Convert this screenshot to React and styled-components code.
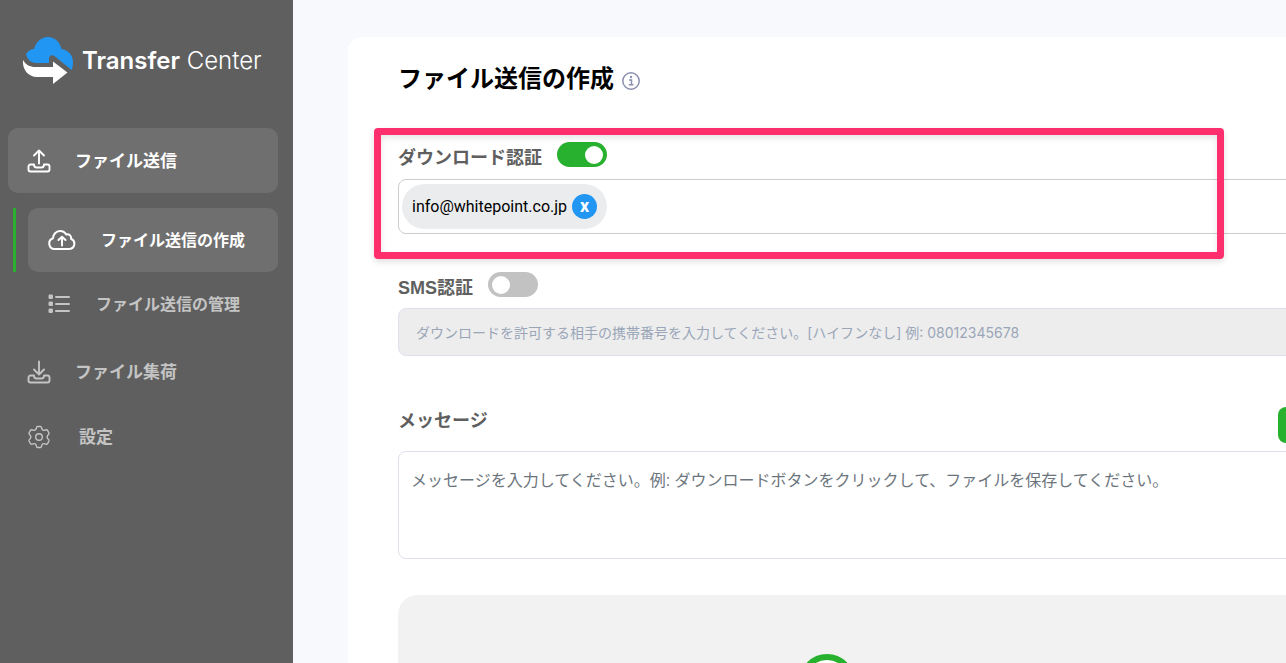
import React from 'react'
import styled, { createGlobalStyle } from 'styled-components'

const green = '#28b12f'
const blue = '#2196f3'
const grey = '#5f5f5f'
const muted = '#c4c4c4'
const fonts = `'Liberation Sans', 'Noto Sans CJK JP', sans-serif`

const GlobalStyle = createGlobalStyle`
    *{
        box-sizing: border-box;
    }
    body{
        margin: 0;
        background: #f8f9fd;
        font-family: ${fonts};
    }
    button, input, textarea{
        font-family: inherit;
    }
`;

const Layout = styled.div`
    display: flex;
    height: 100vh;
    overflow: hidden;
`;

const Sidebar = styled.aside`
    flex: 0 0 293px;
    background: ${grey};
    padding: 36px 15px 0 8px;
`;

const Brand = styled.a`
    display: flex;
    align-items: center;
    gap: 8px;
    height: 48px;
    margin: 0 0 44px 14px;
    color: white;
    font-family: Inter, sans-serif;
    font-size: 24px;
    font-weight: 300;
    text-decoration: none;
    white-space: nowrap;
    b{
        font-weight: 600;
    }
`;

const NavList = styled.ul`
    list-style: none;
    margin: 0;
    padding: 0;
`;

const NavItem = styled.li`
    min-height: 65px;
`;

const NavLink = styled.a`
    display: flex;
    align-items: center;
    gap: ${props => props.$wide ? '28px' : '24px'};
    height: 65px;
    padding-left: 19px;
    border-radius: 10px;
    background: ${props => props.$active ? '#6f6f6f' : 'transparent'};
    color: ${props => props.$active ? 'white' : muted};
    font-size: 17px;
    font-weight: 700;
    text-decoration: none;
    svg{
        flex: none;
    }
    span{
        padding-bottom: 2px;
    }
`;

const SubList = styled(NavList)`
    margin: 15px 0 3px 5px;
`;

const SubItem = styled.li`
    height: 64px;
    padding-left: 12px;
    border-left: 3px solid ${props => props.$active ? green : 'transparent'};
`;

const SubLink = styled(NavLink)`
    gap: 25px;
    height: 64px;
    padding-left: 20px;
    font-size: 16px;
`;

const Main = styled.main`
    flex: 1;
    min-width: 0;
    overflow: hidden;
    padding: 37px 0 0 55px;
`;

const Card = styled.form`
    width: calc(100% + 92px);
    min-height: 100%;
    padding: 24px 0 0 50px;
    border-radius: 14px;
    background: white;
`;

const TitleRow = styled.div`
    display: flex;
    align-items: center;
    gap: 7px;
    height: 36px;
    h1{
        margin: 0;
        color: black;
        font-size: 24px;
        line-height: 36px;
        font-weight: 700;
    }
    svg{
        margin-top: 3px;
    }
`;

const Section = styled.section`
    position: relative;
    margin-top: ${props => props.$gap};
`;

const Highlight = styled.div`
    position: absolute;
    top: -14px;
    left: -24px;
    width: 850px;
    height: 131px;
    border: 7px solid #ff2e6c;
    border-radius: 4px;
    box-shadow: 0 3px 6px rgba(0, 0, 0, 0.12), inset 0 3px 6px rgba(0, 0, 0, 0.1);
    pointer-events: none;
`;

const LabelRow = styled.div`
    display: flex;
    align-items: center;
    gap: 15px;
`;

const MessageRow = styled(LabelRow)`
    align-items: flex-start;
    justify-content: space-between;
`;

const Label = styled.label`
    padding-top: 4px;
    color: ${grey};
    font-size: 18px;
    line-height: 24px;
    font-weight: 700;
`;

const MessageLabel = styled(Label)`
    padding-top: 2px;
`;

const Toggle = styled.input`
    appearance: none;
    display: flex;
    align-items: center;
    width: 50px;
    height: 25px;
    margin: 0 0 3px;
    padding: 0 4px;
    border-radius: 13px;
    background: #c2c2c2;
    cursor: pointer;
    &::before{
        content: '';
        width: 18px;
        height: 18px;
        border-radius: 50%;
        background: white;
    }
    &:checked{
        justify-content: flex-end;
        background: ${green};
    }
`;

const TagField = styled.div`
    display: flex;
    align-items: center;
    height: 55px;
    margin-top: 9px;
    padding: 0 3px;
    border: 1px solid #ccc;
    border-radius: 8px;
    input{
        flex: 1;
        height: 40px;
        border: 0;
        outline: 0;
        background: transparent;
        font-size: 16px;
    }
`;

const Tag = styled.span`
    display: flex;
    align-items: center;
    gap: 5px;
    height: 45px;
    padding: 0 10px;
    border-radius: 23px;
    background: #ebecee;
    color: black;
    font-family: Roboto, sans-serif;
    font-size: 16px;
`;

const RemoveButton = styled.button`
    width: 25px;
    height: 25px;
    padding: 0 0 2px;
    border: 0;
    border-radius: 50%;
    background: ${blue};
    color: white;
    font-size: 18px;
    line-height: 20px;
    font-weight: 700;
`;

const PhoneInput = styled.input`
    display: block;
    width: 100%;
    height: 48px;
    margin-top: 8px;
    padding: 0 17px;
    border: 1px solid #dfdfee;
    border-radius: 8px;
    background: #ededed;
    && {
        font-family: Inter, 'Noto Sans CJK JP', sans-serif;
    }
    font-size: 14px;
    &::placeholder{
        color: #9aa6b8;
        opacity: 1;
    }
`;

const TemplateButton = styled.button`
    width: 100px;
    height: 36px;
    border: 0;
    border-radius: 8px;
    background: ${green};
`;

const MessageBox = styled.textarea`
    display: block;
    width: 100%;
    height: 108px;
    margin-top: 8px;
    padding: 17px 12px;
    border: 1px solid #dfdfee;
    border-radius: 8px;
    resize: none;
    font-size: 16px;
    line-height: 24px;
    &::placeholder{
        color: #6c757d;
        opacity: 1;
    }
`;

const DropZone = styled.div`
    display: flex;
    justify-content: center;
    height: 200px;
    margin-top: 36px;
    padding: 59px 122px 0 0;
    border-radius: 20px;
    background: #f2f2f2;
`;

const Logo = () => (
    <svg width="52" height="48" viewBox="0 0 52 48" aria-hidden="true">
        <path fill={blue} d="M4 18C6 15 9 13 12 13C14 6 19 1 26 1C33 1 38 6 39.500 13C46 14 51 19 51 26C51 29 50.500 32 49.500 34L33 20.500C30 18 27 20 27 23V27H14C9 27 5 23 4 18Z" />
        <path fill="white" d="M1 24C4 29 8 31 13 31H31V25.500L45.500 36.500L31 48V41H15C6 41 0 33 1 24Z" />
    </svg>
)

const TrayIcon = ({ down }) => (
    <svg width="24" height="24" viewBox="0 0 24 24" fill="none" stroke="currentColor" strokeWidth="1.9" strokeLinecap="round" strokeLinejoin="round" aria-hidden="true">
        <path d={down ? 'M12 1.500V14M7 9.500L12 14.500L17 9.500' : 'M12 14.500V2M7 6.500L12 1.500L17 6.500'} />
        <path d="M7 15.500H3.500A2 2 0 0 0 1.500 17.500V20.500A2 2 0 0 0 3.500 22.500H20.500A2 2 0 0 0 22.500 20.500V17.500A2 2 0 0 0 20.500 15.500H17C17 17.500 16 18.500 14.500 18.500H9.500C8 18.500 7 17.500 7 15.500Z" />
    </svg>
)

const CloudIcon = () => (
    <svg width="28" height="20" viewBox="0 0 28 20" fill="none" stroke="currentColor" strokeWidth="2" strokeLinecap="round" strokeLinejoin="round" aria-hidden="true">
        <path d="M6.500 19A5.500 5.500 0 0 1 5 8.300C5 4.500 8 1 12 1C14.800 1 17 2.300 18.200 4.500C21 3.600 23.600 5.800 23 8.800A5.300 5.300 0 0 1 21.500 19ZM14 15.500V7M10.500 10L14 6.800L17.500 10" />
    </svg>
)

const ListIcon = () => (
    <svg width="23" height="20" viewBox="0 0 23 20" fill="currentColor" aria-hidden="true">
        <rect x="0.5" y="0.5" width="4.500" height="4.500" rx="1.200" />
        <rect x="0.5" y="7.5" width="4.500" height="4.500" rx="1.200" />
        <rect x="0.5" y="14.5" width="4.500" height="4.500" rx="1.200" />
        <path fill="none" stroke="currentColor" strokeWidth="2" strokeLinecap="round" d="M8 3H21M8 10H21M8 17H21" />
    </svg>
)

const GearIcon = () => (
    <svg width="24" height="24" viewBox="0 0 24 24" fill="none" stroke="currentColor" strokeWidth="1.4" strokeLinejoin="round" aria-hidden="true">
        <circle cx="12" cy="12" r="3.300" />
        <path d="M10.500 1.500H13.500Q14.600 1.600 14.700 3.500Q15.200 5.600 17.200 5.400Q19.600 4.300 20.500 5.300L22 8Q22.400 9 20.800 10.200Q19.400 12 20.800 13.800Q22.400 15 22 16L20.500 18.700Q19.600 19.700 17.200 18.600Q15.200 18.400 14.700 20.500Q14.600 22.400 13.500 22.500H10.500Q9.400 22.400 9.300 20.500Q8.800 18.400 6.800 18.600Q4.400 19.700 3.500 18.700L2 16Q1.600 15 3.200 13.800Q4.600 12 3.200 10.200Q1.600 9 2 8L3.500 5.300Q4.400 4.300 6.800 5.400Q8.800 5.600 9.300 3.500Q9.400 1.600 10.500 1.500Z" />
    </svg>
)

const InfoIcon = () => (
    <svg width="20" height="20" viewBox="0 0 20 20" fill="none" stroke="#8b90b0" strokeWidth="1.5" aria-hidden="true">
        <circle cx="10" cy="10" r="8.200" />
        <path d="M8 9H10.500V13.500M7.800 13.800H12.500" />
        <circle cx="10" cy="6" r="1.200" fill="#8b90b0" stroke="none" />
    </svg>
)

const RingIcon = () => (
    <svg width="56" height="56" viewBox="0 0 56 56" aria-hidden="true">
        <circle cx="28" cy="28" r="25" fill="white" stroke={green} strokeWidth="6" />
    </svg>
)

const App = () => {
    return(
        <Layout>
            <GlobalStyle />
            <Sidebar>
                <Brand href="#"><Logo /><span><b>Transfer</b> Center</span></Brand>
                <nav>
                    <NavList>
                        <NavItem>
                            <NavLink href="#send" $active><TrayIcon /><span>ファイル送信</span></NavLink>
                            <SubList>
                                <SubItem $active>
                                    <SubLink href="#create" $active><CloudIcon /><span>ファイル送信の作成</span></SubLink>
                                </SubItem>
                                <SubItem>
                                    <SubLink href="#manage"><ListIcon /><span>ファイル送信の管理</span></SubLink>
                                </SubItem>
                            </SubList>
                        </NavItem>
                        <NavItem>
                            <NavLink href="#collect"><TrayIcon down /><span>ファイル集荷</span></NavLink>
                        </NavItem>
                        <NavItem>
                            <NavLink href="#settings" $wide><GearIcon /><span>設定</span></NavLink>
                        </NavItem>
                    </NavList>
                </nav>
            </Sidebar>
            <Main>
                <Card>
                    <TitleRow><h1>ファイル送信の作成</h1><InfoIcon /></TitleRow>
                    <Section $gap="45px">
                        <LabelRow>
                            <Label htmlFor="download-auth">ダウンロード認証</Label>
                            <Toggle type="checkbox" id="download-auth" defaultChecked />
                        </LabelRow>
                        <TagField>
                            <Tag>info@whitepoint.co.jp <RemoveButton type="button">x</RemoveButton></Tag>
                            <input type="email" aria-label="ダウンロード認証" />
                        </TagField>
                        <Highlight />
                    </Section>
                    <Section $gap="38px">
                        <LabelRow>
                            <Label htmlFor="sms-auth">SMS認証</Label>
                            <Toggle type="checkbox" id="sms-auth" />
                        </LabelRow>
                        <PhoneInput type="tel" disabled aria-label="SMS認証" placeholder="ダウンロードを許可する相手の携帯番号を入力してください。[ハイフンなし] 例: 08012345678" />
                    </Section>
                    <Section $gap="51px">
                        <MessageRow>
                            <MessageLabel htmlFor="message">メッセージ</MessageLabel>
                            <TemplateButton type="button" aria-label="メッセージ" />
                        </MessageRow>
                        <MessageBox id="message" placeholder="メッセージを入力してください。例: ダウンロードボタンをクリックして、ファイルを保存してください。" />
                    </Section>
                    <DropZone><RingIcon /></DropZone>
                </Card>
            </Main>
        </Layout>
    );
}

export default App;
